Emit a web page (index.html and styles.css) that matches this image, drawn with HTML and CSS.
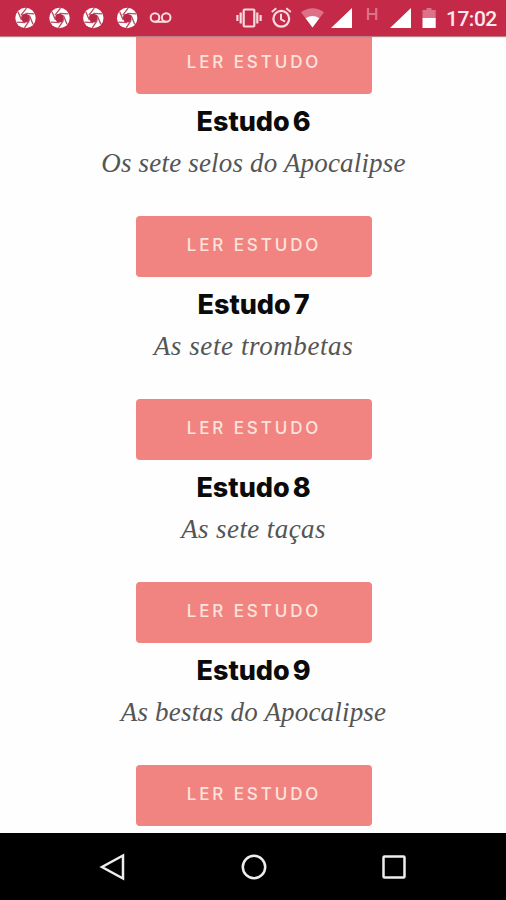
FILE: index.html
```html
<!DOCTYPE html>
<html lang="pt">
<head>
<meta charset="utf-8">
<title>Estudos</title>
<link rel="stylesheet" href="styles.css">
</head>
<body>
<header class="status">
<svg class="notifications" width="180" height="36" viewBox="0 0 180 36">
<defs><g id="shutter"><circle r="10.2" fill="#fff"/><path d="M-3.4-3.4 0-4.6 4-2.7 4.4 1.8 1.8 4.5-2.7 4-4.6 0Z" fill="#b82846"/><path d="M-4.5-2.8 1-9.8M0-4.6 9-4.2M4-2.3 7.5 6.2M4 2.4-1 9.8M0 4.6-9 4.2M-4 2-7.5-6.2" stroke="#b94a62" stroke-width="1.35"/></g></defs>
<use href="#shutter" x="25.5" y="18"/><use href="#shutter" x="59.5" y="18"/><use href="#shutter" x="93.3" y="18"/><use href="#shutter" x="127.2" y="18"/>
<g fill="none" stroke="#fbdde2" stroke-width="2"><circle cx="155" cy="17.5" r="4.3"/><circle cx="166.2" cy="17.5" r="4.3"/><path d="M155 21.8h11.2"/></g>
</svg>
<div class="system">
<svg width="205" height="36" viewBox="235 0 205 36">
<g fill="none" stroke="#f9d8de" stroke-width="2.2"><rect x="243.7" y="9.5" width="10.6" height="17" rx="1"/><path d="M240.7 12.5v11M257.3 12.5v11M237.4 15v6M260.6 15v6"/><circle cx="281.3" cy="18.8" r="7.9"/><path d="M281 13.8v5.5l4 2.4M271.8 12l4.5-3.8M290.8 12l-4.5-3.8" stroke-width="2"/></g>
<path d="M301 12.2Q312.500 4.500 324 12.200L312.500 27.500Z" fill="#dc7187"/>
<path d="M305.700 18.300Q312.500 13.800 319.300 18.300L312.500 27.500Z" fill="#fff"/>
<path d="M352 8v20h-21ZM411 8v20h-21Z" fill="#fff"/>
<path d="M368 8v12M376.200 8v12M368 14h8.200" stroke="#dc7187" stroke-width="2.200"/>
<path d="M426.500 8h5v2h4.200v9h-13.200v-9h4Z" fill="#dc7187"/><path d="M422.500 18h13.200v10h-13.200Z" fill="#fff"/>
</svg>
<time class="clock">17:02</time>
</div>
</header>
<main class="studies">
<a class="read">LER ESTUDO</a>
<section class="study"><h2>Estudo 6</h2><p class="tight">Os sete selos do Apocalipse</p><a class="read">LER ESTUDO</a></section>
<section class="study"><h2>Estudo 7</h2><p class="wide">As sete trombetas</p><a class="read">LER ESTUDO</a></section>
<section class="study"><h2>Estudo 8</h2><p>As sete taças</p><a class="read">LER ESTUDO</a></section>
<section class="study"><h2>Estudo 9</h2><p class="tight">As bestas do Apocalipse</p><a class="read">LER ESTUDO</a></section>
</main>
<nav class="navbar">
<svg width="28" height="28" viewBox="0 0 28 28"><path d="M24 2.500v23L3 14Z"/></svg>
<svg width="28" height="28" viewBox="0 0 28 28"><circle cx="14" cy="14" r="11.200"/></svg>
<svg width="28" height="28" viewBox="0 0 28 28"><rect x="3.500" y="3.500" width="21" height="21" rx="1"/></svg>
</nav>
</body>
</html>
```
FILE: styles.css
```css
* { box-sizing: border-box; }
body {
  margin: 0;
  height: 900px;
  display: flex;
  flex-direction: column;
  overflow: hidden;
  background: #fefefe;
}
.status {
  height: 36px;
  flex: none;
  display: flex;
  justify-content: space-between;
  background: #c42a47;
  box-shadow: 0 1px 1px #b98189;
  z-index: 1;
}
.status svg { display: block; }
.system { display: flex; width: 271px; }
.clock {
  padding-left: 6px;
  font: 500 21px/38px Roboto, sans-serif;
  letter-spacing: -0.5px;
  color: #fde9ec;
}
.studies {
  flex: 1;
  min-height: 0;
  margin-top: -3px;
  padding-left: 1px;
  overflow: hidden;
  display: flex;
  flex-direction: column;
  align-items: center;
}
.study {
  flex: none;
  width: 100%;
  display: flex;
  flex-direction: column;
  align-items: center;
}
.read {
  flex: none;
  width: 236px;
  height: 61px;
  border-radius: 4px;
  background: #f18381;
  color: #fce4dc;
  font: 500 17px/58px Inter, sans-serif;
  letter-spacing: 2.9px;
  text-indent: 1px;
  text-align: center;
}
.study .read {
  margin-top: -0.5px;
  margin-bottom: 0.5px;
}
h2 {
  margin: 0;
  font: 800 27px/55px Inter, sans-serif;
  letter-spacing: 0;
  word-spacing: -3px;
  color: #0b0b0b;
}
p {
  margin: 0 0 39px;
  font: italic 27px/28px "Liberation Serif", serif;
  letter-spacing: 0.4px;
  color: #555;
  white-space: nowrap;
}
.tight { letter-spacing: 0.18px; }
.wide { letter-spacing: 0.6px; }
.navbar {
  flex: none;
  height: 67px;
  padding: 0 98px 0 99px;
  display: flex;
  align-items: center;
  justify-content: space-between;
  background: #000;
}
.navbar svg {
  fill: none;
  stroke: #eee;
  stroke-width: 2.5;
}
```
